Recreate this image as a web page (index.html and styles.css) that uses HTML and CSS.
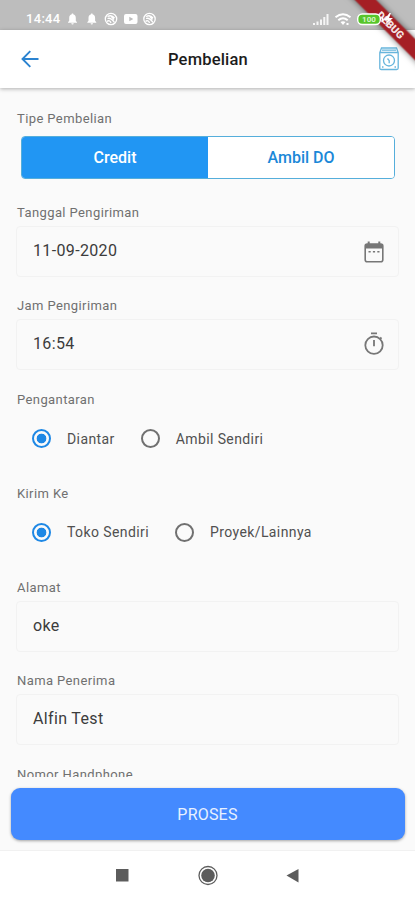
FILE: index.html
```html
<!DOCTYPE html>
<html lang="id">
<head>
<meta charset="utf-8">
<title>Pembelian</title>
<link rel="stylesheet" href="styles.css">
</head>
<body>
<div class="screen">
  <div class="status">
    <span class="clock">14:44</span>
    <svg class="left-icons" width="90" height="14" viewBox="0 0 90 14" fill="#fff">
      <path id="bell" d="M2 10.2 3.2 8.8V6C3.2 4 4.2 2.700 5.800 2.300V1.600h1.400v.7C8.800 2.700 9.800 4 9.800 6v2.800L11 10.200v.6H2zM5.300 11.300h2.400a1.200 1.200 0 0 1-2.400 0z"/>
      <use href="#bell" x="19.300"/>
      <g id="ball" fill="none" stroke="#fff" stroke-width="1.300"><circle cx="45" cy="7" r="5.700"/><path d="M41.500 4.500c3-1.500 5.500-.5 7 1.500M41.500 6.500c3-1 5 1 7 4M41 9.500c1.500-1.500 3.500-.5 4 1.500M44.500 3.500l3.500 4"/></g>
      <path fill-rule="evenodd" d="M60 2h9.500q2 0 2 2v6q0 2-2 2H60q-2 0-2-2V4q0-2 2-2zM63.300 4.700v4.600l4-2.300z"/>
      <use href="#ball" x="38.500"/>
    </svg>
    <svg class="right-icons" width="86" height="16" viewBox="0 0 86 16">
      <path d="M1 12h2v2H1zM4.500 10.500h2V14h-2zM8 8.500h2V14H8zM11.300 6h2v8h-2zM14.500 3h2v11h-2z" fill="#fff" opacity=".85"/>
      <g fill="none" stroke="#fff" stroke-width="2"><path d="M23.500 6.300q7.500-6 15 0M26.300 9.200q4.700-4 9.400 0"/></g>
      <path d="M28.500 11q2.500-1.600 5 0L31 14zM34.500 12h2v2h-2z" fill="#fff"/>
      <rect x="45.700" y="3" width="22.600" height="10.500" rx="4.500" fill="#57c52b" stroke="#fff" stroke-width="1.400"/>
      <text x="57" y="11.300" class="battery">100</text>
      <path d="M69.500 5.500v6q2-1 2-3t-2-3z" fill="#fff"/>
      <path d="m77.500 2-5.500 7h3.500L73 14l8-7h-4l2-5z" fill="#fff"/>
    </svg>
  </div>

  <header class="appbar">
    <svg class="back" width="20" height="20" viewBox="0 0 20 20" fill="none" stroke="#2b83d0" stroke-width="1.900"><path d="M18.500 10H3M10.300 2.200 2.500 10l7.800 7.800"/></svg>
    <h1>Pembelian</h1>
    <svg class="history" width="20" height="24" viewBox="0 0 20 24" fill="none" stroke="#67b5dc" stroke-width="1.300"><path d="M2.500 1h15l1.700 4.500V21q0 1.500-1.500 1.500H2.300Q.8 22.500.8 21V5.500zM.8 5.500h18.400M3 3.200h14"/><circle cx="10" cy="13.500" r="5.500"/><path d="m8.500 11.500 1.700 2.200v2.500M3 20h1.500M15.500 20H17"/></svg>
  </header>

  <main class="form">
    <section class="group">
      <label>Tipe Pembelian</label>
      <div class="toggle"><button class="on">Credit</button><button>Ambil DO</button></div>
    </section>
    <section class="group">
      <label>Tanggal Pengiriman</label>
      <div class="input"><span>11-09-2020</span>
        <svg class="calendar" width="20" height="22" viewBox="0 0 20 22"><rect x="1.200" y="3" width="17.600" height="17.700" rx="2" fill="none" stroke="#777" stroke-width="1.600"/><path d="M1 3h18v4.500H1zM3.700.5h2V4h-2zM14.300.5h2V4h-2zM4.500 10h2.200v1.600H4.500zM8.900 10h2.200v1.600H8.900zM13.300 10h2.200v1.600h-2.200z" fill="#777"/></svg>
      </div>
    </section>
    <section class="group">
      <label>Jam Pengiriman</label>
      <div class="input"><span>16:54</span>
        <svg width="20" height="23" viewBox="0 0 20 23" fill="none" stroke="#777" stroke-width="1.800"><circle cx="10" cy="13.200" r="8.700"/><path d="M7 1.300h6M10 8v6.300M15.800 7.200l1.700-1.700"/></svg>
      </div>
    </section>
    <section class="group">
      <label>Pengantaran</label>
      <div class="radios">
        <div class="radio"><i class="dot checked"></i><span>Diantar</span></div>
        <div class="radio"><i class="dot"></i><span>Ambil Sendiri</span></div>
      </div>
    </section>
    <section class="group">
      <label>Kirim Ke</label>
      <div class="radios">
        <div class="radio"><i class="dot checked"></i><span>Toko Sendiri</span></div>
        <div class="radio"><i class="dot"></i><span>Proyek/Lainnya</span></div>
      </div>
    </section>
    <section class="group">
      <label>Alamat</label>
      <div class="input"><span>oke</span></div>
    </section>
    <section class="group">
      <label>Nama Penerima</label>
      <div class="input"><span>Alfin Test</span></div>
    </section>
    <section class="group">
      <label>Nomor Handphone</label>
    </section>
  </main>

  <footer class="action"><button class="submit">PROSES</button></footer>

  <nav class="sysnav">
    <svg width="415" height="49" viewBox="0 0 415 49" fill="#5c5c5c"><path d="M116 18h12.500v12.500H116z"/><circle cx="208" cy="24.500" r="6.800"/><circle cx="208" cy="24.500" r="9" fill="none" stroke="#5c5c5c" stroke-width="1.300"/><path d="M286.500 24.500 298.500 18v13.500z"/></svg>
  </nav>

  <svg class="ribbon" width="75" height="75" viewBox="0 0 75 75">
    <g transform="translate(50.500 25) rotate(45)"><rect class="band" x="-60" y="-7.500" width="120" height="15"/><text class="debug" x="0" y="3.700">DEBUG</text></g>
  </svg>
</div>
</body>
</html>
```
FILE: styles.css
```css
* { box-sizing: border-box; }
body { margin: 0; font-family: Roboto, "Liberation Sans", sans-serif; }
button { font-family: inherit; border: 0; padding: 0; margin: 0; }
.screen {
  position: relative;
  width: 415px;
  height: 900px;
  display: flex;
  flex-direction: column;
  background: #fafafa;
  overflow: hidden;
}
.status {
  flex: none;
  height: 30px;
  padding: 7px 17px 0 26px;
  display: flex;
  align-items: center;
  background: #bdbdbd;
  color: #fff;
}
.clock { width: 40px; font-size: 13px; font-weight: 500; letter-spacing: .3px; }
.right-icons { position: relative; z-index: 3; margin-left: auto; }
.battery { font-size: 8px; font-weight: 700; fill: #d8f5c8; text-anchor: middle; }
.appbar {
  flex: none;
  height: 58px;
  padding: 0 16px 0 20px;
  display: flex;
  align-items: center;
  justify-content: space-between;
  background: #fff;
  box-shadow: 0 1px 4px rgba(0, 0, 0, .3);
  z-index: 1;
}
.appbar h1 { margin: 0 3px 0 0; font-size: 16.500px; font-weight: 500; letter-spacing: .2px; color: #1c1c1c; }
.form { flex: none; height: 689px; padding: 22px 16px 0; overflow: hidden; }
.group { height: 93.720px; }
.group label { display: block; height: 16px; padding-left: 1px; line-height: 17px; font-size: 13px; letter-spacing: .4px; color: #707070; }
.toggle {
  height: 43px;
  margin: 10px 4px 0 5px;
  display: flex;
  border: 1px solid #55aedb;
  border-radius: 4px;
  overflow: hidden;
}
.toggle button { flex: 1; background: #fff; color: #1b88d8; font-size: 16px; font-weight: 500; }
.toggle .on { background: #2196f3; color: #fff; }
.input {
  height: 51px;
  margin-top: 6px;
  padding: 0 14px 2px 16px;
  display: flex;
  align-items: center;
  justify-content: space-between;
  border: 1px solid #f2f2f2;
  border-radius: 4px;
  color: #3c3c3c;
  font-size: 16px;
  letter-spacing: .35px;
}
.calendar { margin-top: 3px; }
.radios { height: 63px; padding-left: 16px; display: flex; align-items: center; gap: 26px; }
.radio { display: flex; align-items: center; gap: 16px; font-size: 14px; letter-spacing: .4px; color: #505050; }
.dot { width: 19px; height: 19px; border: 2px solid #707070; border-radius: 50%; }
.dot.checked { border-color: #1e88e5; background: radial-gradient(circle, #1e88e5 4.500px, transparent 5.200px); }
.action { flex: none; height: 74px; padding: 11px 10px 0 11px; border-bottom: 1px solid #f1f1f1; }
.submit {
  width: 100%;
  height: 52px;
  padding-right: 1px;
  border-radius: 9px;
  background: #448aff;
  color: #e8f1ff;
  font-size: 16px;
  letter-spacing: .2px;
  box-shadow: 0 1px 3px rgba(0, 0, 0, .35);
}
.sysnav { flex: 1; background: #fff; }
.sysnav svg { display: block; }
.ribbon { position: absolute; top: 0; right: 0; z-index: 2; }
.band { fill: #a51f25; filter: drop-shadow(0 0 3px rgba(0, 0, 0, .55)); }
.debug { font-size: 10.500px; font-weight: 900; fill: #f4e4e4; text-anchor: middle; }
```
